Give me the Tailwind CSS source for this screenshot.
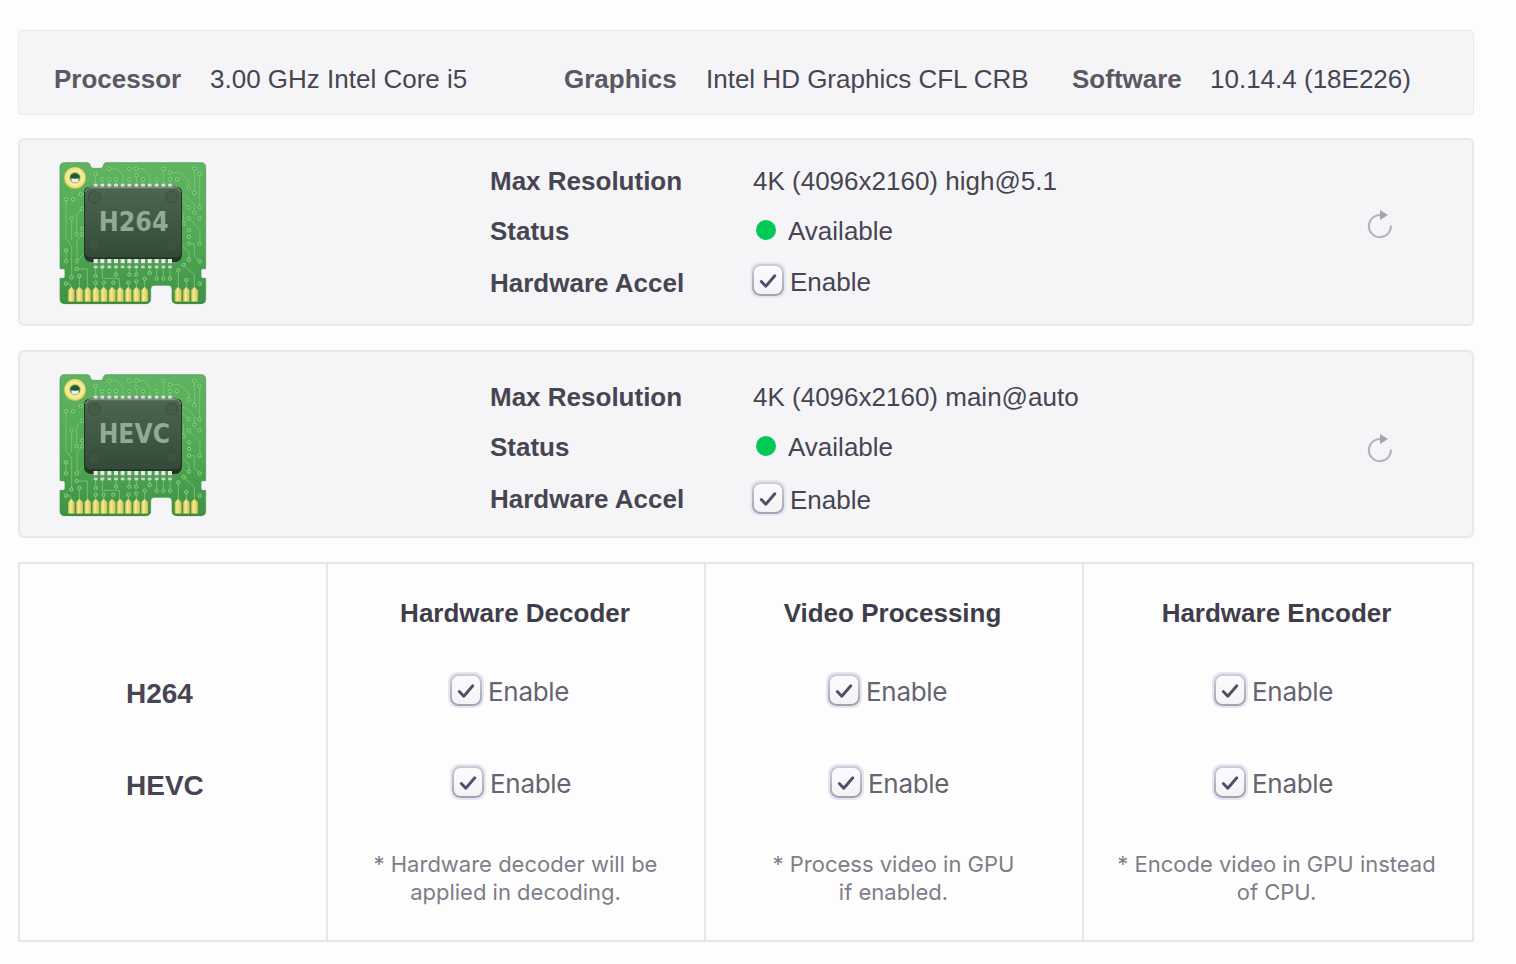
<!DOCTYPE html>
<html lang="en">
<head>
<meta charset="utf-8">
<title>Hardware Acceleration</title>
<script src="https://cdn.jsdelivr.net/npm/@tailwindcss/browser@4"></script>
</head>
<body class="bg-[#fdfdfd] font-['Liberation_Sans',Arial,sans-serif] text-[26px] leading-[30px] text-[#474552] w-[1516px] h-[964px] overflow-hidden pt-[30px] pl-[18px]">

<svg class="absolute w-0 h-0">
  <defs>
    <linearGradient id="board" x1="0" y1="0" x2="0" y2="1">
      <stop offset="0" stop-color="#62b765"/><stop offset=".55" stop-color="#54aa58"/><stop offset="1" stop-color="#3f9346"/>
    </linearGradient>
    <linearGradient id="body" x1="0" y1="0" x2="0" y2="1">
      <stop offset="0" stop-color="#4d6650"/><stop offset="1" stop-color="#344a38"/>
    </linearGradient>
    <linearGradient id="gold" x1="0" y1="0" x2="1" y2="0">
      <stop offset="0" stop-color="#c9bb4c"/><stop offset=".35" stop-color="#f4eb92"/><stop offset="1" stop-color="#d2c255"/>
    </linearGradient>
    <linearGradient id="box" x1="0" y1="0" x2="0" y2="1">
      <stop offset="0" stop-color="#cbccda"/><stop offset="1" stop-color="#a2a2b1"/>
    </linearGradient>
    <linearGradient id="face" x1="0" y1="0" x2="0" y2="1">
      <stop offset="0" stop-color="#fcfcfe"/><stop offset="1" stop-color="#f3f3f6"/>
    </linearGradient>
    <pattern id="hatch" width="8" height="8" patternUnits="userSpaceOnUse">
      <path d="M-2 2L2-2M0 8L8 0M6 10L10 6" stroke="#2f8038" stroke-opacity=".22" stroke-width="2"/>
    </pattern>
    <path id="pcb" d="M44 23H110Q120 23 121 32Q122 40 130 40H152Q159 40 160 32Q161 23 170 23H454Q467 23 467 37V341H458Q453 341 453 346V364Q453 370 459 370H467V433Q467 446 453 446H380Q367 446 366 434V404Q366 391 354 391H315Q302 391 302 404V433Q301 446 288 446H44Q30 446 30 433V370H39Q45 370 45 364V347Q45 341 39 341H30V36Q30 23 44 23Z"/>
    <symbol id="check" viewBox="0 0 36 36">
      <rect x="0" y="0" width="36" height="36" rx="9.500" fill="#e6e6ee"/>
      <rect x="3" y="3" width="30" height="30" rx="7.500" fill="url(#face)" stroke="url(#box)" stroke-width="2"/>
      <path d="M11.300 19.500L15.800 24.200L24.800 13.800" fill="none" stroke="#504e68" stroke-width="2.900" stroke-linecap="round" stroke-linejoin="round"/>
    </symbol>
    <symbol id="reload" viewBox="0 0 60 50">
      <path d="M30 15A11.100 11.100 0 1 0 41 25.500" fill="none" stroke="#b5b5b9" stroke-width="2"/>
      <path d="M30 10L38 15L30 20Z" fill="#a5a5aa"/>
    </symbol>
    <marker id="via" markerUnits="userSpaceOnUse" markerWidth="16" markerHeight="16" refX="8" refY="8">
      <circle cx="8" cy="8" r="5" fill="#459c4b" stroke="#8fd87e" stroke-width="3"/>
    </marker>
    <symbol id="chip" viewBox="0 0 510 465">
      <use href="#pcb" fill="url(#board)"/>
      <use href="#pcb" fill="url(#hatch)" stroke="#43954a" stroke-width="2"/>
      <path d="M34 440Q38 444 44 444H288Q297 444 300 437M368 437Q371 444 380 444H453Q460 444 464 438" fill="none" stroke="#2f7d39" stroke-width="3"/>
      <g fill="none" stroke="#7cc970" stroke-width="2.500">
        <g marker-start="url(#via)"></g>
        <g style="marker-start:url(#via)">
        <path d="M178 41H200L219 60V90"/><path d="M259 41H280L300 60V90"/><path d="M238 41V41"/>
        <path d="M137 57V90"/><path d="M157 73V90"/><path d="M178 73V90"/><path d="M198 73V90"/><path d="M238 73V90"/>
        <path d="M259 61V90"/><path d="M279 73V90"/><path d="M320 73V90"/><path d="M340 41V90"/><path d="M360 73V90"/>
        <path d="M381 73V73"/><path d="M360 53H390L416 75V98"/><path d="M433 41V114"/><path d="M449 57V157"/>
        <path d="M433 114V114"/><path d="M416 98V98"/>
        <path d="M433 173V148L406 122H395"/><path d="M416 157L397 139"/><path d="M449 157V157"/><path d="M449 190V190"/>
        <path d="M416 190L450 224V266"/><path d="M401 206V172"/><path d="M417 226V226"/><path d="M417 246V246"/>
        <path d="M417 266H433V303L449 319"/><path d="M449 266V266"/><path d="M449 319V319"/><path d="M417 314V292L397 272"/>
        <path d="M401 330L433 360V395"/><path d="M385 346V400"/><path d="M409 375V400"/><path d="M449 386V386"/>
        <path d="M92 117H104"/><path d="M48 133V250L65 275V366"/><path d="M69 133V133"/><path d="M97 161L80 178V238"/><path d="M65 190V255"/>
        <path d="M80 238V238"/><path d="M97 221V221"/><path d="M48 286V286"/><path d="M48 319V286"/><path d="M97 238L81 254V319"/>
        <path d="M80 319L103 296"/><path d="M80 342H112V400"/><path d="M64 367V367"/><path d="M88 363V400"/><path d="M48 386H60L65 400"/>
        <path d="M137 363V335"/><path d="M137 383V400"/><path d="M161 383V400"/><path d="M157 335V370H208V400"/><path d="M198 359V335"/><path d="M190 383H197"/>
        <path d="M238 359V335"/><path d="M259 359V335"/><path d="M235 383V400"/><path d="M259 379V400"/><path d="M284 371V400"/><path d="M299 354V335"/>
        <path d="M320 371V335"/><path d="M340 371V335"/><path d="M360 371V335"/>
        </g>
      </g>
      <circle cx="75" cy="69" r="33" fill="#c9bd4f"/><circle cx="75" cy="68" r="31" fill="#eee682"/>
      <circle cx="75" cy="68" r="22" fill="none" stroke="#fbf7be" stroke-width="3"/>
      <circle cx="75" cy="68" r="15.500" fill="#276e42" stroke="#cfc359" stroke-width="2"/>
      <ellipse cx="75" cy="74" rx="11" ry="8" fill="#e7f0ee"/>
      <path d="M61 62Q75 52 89 62Q88 72 75 71Q62 72 61 62Z" fill="#23583a"/>
      <g stroke="#e5dbe2" stroke-width="11">
        <path d="M137 86V98M157 86V98M178 86V98M198 86V98M218 86V98M238 86V98M259 86V98M279 86V98M299 86V98M320 86V98M340 86V98M360 86V98"/>
      </g>
      <path d="M102 113Q102 95 121 95H378Q396 95 396 113V299Q394 321 374 321H366V312H131V321H124Q104 321 102 301Z" fill="#243528"/>
      <g fill="none" stroke="#e6e8e2" stroke-width="12">
        <path d="M137 312V325M157 312V325M178 312V325M198 312V325M218 312V325M238 312V325M259 312V325M279 312V325M299 312V325M320 312V325M340 312V325M360 312V325"/>
        <path stroke="#7c9479" stroke-width="6" d="M137 325V332M157 325V332M178 325V332M198 325V332M218 325V332M238 325V332M259 325V332M279 325V332M299 325V332M320 325V332M340 325V332M360 325V332"/>
        <path stroke="#c9d8c4" stroke-width="11" d="M137 332V340M157 332V340M178 332V340M198 332V340M218 332V340M238 332V340M259 332V340M279 332V340M299 332V340M320 332V340M340 332V340M360 332V340"/>
      </g>
      <rect x="105" y="98" width="288" height="209" rx="17" fill="url(#body)"/>
      <path d="M107 111Q109 98 122 98H376Q389 98 391 111" fill="none" stroke="#93a294" stroke-width="3"/>
      <g fill="#41583f" fill-opacity=".5" stroke="#344b38" stroke-width="2.500">
        <circle cx="133" cy="126" r="18"/><circle cx="365" cy="126" r="18"/><circle cx="133" cy="271" r="18"/><circle cx="365" cy="271" r="18"/>
      </g>
      <g fill="url(#gold)" stroke="#6f9a3d" stroke-width="1">
        <path d="M54 440V406L64 395L74 406V440Z"/><path d="M78 440V406L88 395L99 406V440Z"/><path d="M103 440V406L113 395L123 406V440Z"/>
        <path d="M127 440V406L137 395L148 406V440Z"/><path d="M151 440V406L161 395L172 406V440Z"/><path d="M176 440V406L186 395L197 406V440Z"/>
        <path d="M200 440V406L210 395L221 406V440Z"/><path d="M225 440V406L235 395L245 406V440Z"/><path d="M249 440V406L259 395L270 406V440Z"/>
        <path d="M273 440V406L284 395L294 406V440Z"/><path d="M374 440V406L384 395L395 406V440Z"/><path d="M399 440V406L409 395L419 406V440Z"/><path d="M423 440V406L433 395L444 406V440Z"/>
      </g>
    </symbol>
  </defs>
</svg>

<main class="w-[1456px] flex flex-col">
  <section class="h-[85px] rounded-[4px] border border-[#e9e9ec] bg-[#f5f5f7] flex items-center pt-[13px] pl-[35px] whitespace-nowrap">
    <b class="w-[156px] text-[#595863]">Processor</b><span class="w-[354px]">3.00 GHz Intel Core i5</span>
    <b class="w-[142px] text-[#595863]">Graphics</b><span class="w-[366px]">Intel HD Graphics CFL CRB</span>
    <b class="w-[138px] text-[#595863]">Software</b><span>10.14.4 (18E226)</span>
  </section>

  <section class="mt-[23px] h-[188px] rounded-[6px] border-2 border-[#e9e9ec] bg-[#f5f5f7] flex items-start">
    <svg class="ml-[30px] mt-[15px] w-[170px] h-[155px] shrink-0" viewBox="0 0 510 465"><use href="#chip"/>
      <text x="146" y="228" textLength="210" lengthAdjust="spacingAndGlyphs" class="font-['DejaVu_Sans',sans-serif] font-bold text-[77px]" fill="#8fab95">H264</text></svg>
    <div class="ml-[270px] mt-[26px] w-[262px] flex flex-col font-bold">
      <span>Max Resolution</span><span class="mt-[20px]">Status</span><span class="mt-[22px]">Hardware Accel</span>
    </div>
    <div class="mt-[26px] w-[580px] flex flex-col">
      <span class="pl-[1px]">4K (4096x2160) high@5.1</span>
      <span class="mt-[20px] flex items-center"><i class="ml-[4px] mr-[12px] -mt-[2px] w-5 h-5 rounded-full bg-[#00c957]"></i>Available</span>
      <span class="mt-[16px] h-9 -ml-[2px] flex items-center"><svg class="w-9 h-9"><use href="#check"/></svg><span class="pt-[3px] pl-1">Enable</span></span>
    </div>
    <svg class="mt-[60px] ml-[18px] w-[60px] h-[50px]"><use href="#reload"/></svg>
  </section>

  <section class="mt-[24px] h-[188px] rounded-[6px] border-2 border-[#e9e9ec] bg-[#f5f5f7] flex items-start">
    <svg class="ml-[30px] mt-[15px] w-[170px] h-[155px] shrink-0" viewBox="0 0 510 465"><use href="#chip"/>
      <text x="146" y="228" textLength="214" lengthAdjust="spacingAndGlyphs" class="font-['DejaVu_Sans',sans-serif] font-bold text-[77px]" fill="#8fab95">HEVC</text></svg>
    <div class="ml-[270px] mt-[30px] w-[262px] flex flex-col font-bold">
      <span>Max Resolution</span><span class="mt-[20px]">Status</span><span class="mt-[22px]">Hardware Accel</span>
    </div>
    <div class="mt-[30px] w-[580px] flex flex-col">
      <span class="pl-[1px]">4K (4096x2160) main@auto</span>
      <span class="mt-[20px] flex items-center"><i class="ml-[4px] mr-[12px] -mt-[2px] w-5 h-5 rounded-full bg-[#00c957]"></i>Available</span>
      <span class="mt-[18px] h-9 -ml-[2px] flex items-center"><svg class="w-9 h-9"><use href="#check"/></svg><span class="pt-[3px] pl-1">Enable</span></span>
    </div>
    <svg class="mt-[72px] ml-[18px] w-[60px] h-[50px]"><use href="#reload"/></svg>
  </section>

  <section class="mt-[24px] h-[380px] border-2 border-[#e6e6e9] grid grid-cols-[308px_378px_378px_388px] font-['Inter',sans-serif] text-[#666470]">
    <div class="border-r-2 border-[#e6e6e9] pl-[106px] pt-[114px] flex flex-col gap-[60px] text-[28px] leading-[32px] font-bold text-[#474552] font-['Liberation_Sans',Arial,sans-serif]">
      <span>H264</span><span>HEVC</span>
    </div>
    <div class="border-r-2 border-[#e6e6e9] pt-[34px]">
      <h2 class="pr-[2px] text-center font-bold text-[#3f3d4a] font-['Liberation_Sans',Arial,sans-serif]">Hardware Decoder</h2>
      <div class="mt-[44px] ml-[120px] h-9 flex items-center"><svg class="w-9 h-9 mr-[3px]"><use href="#check"/></svg><span class="pt-[3px] pl-[1px] tracking-[-0.3px]">Enable</span></div>
      <div class="mt-[56px] ml-[122px] h-9 flex items-center"><svg class="w-9 h-9 mr-[3px]"><use href="#check"/></svg><span class="pt-[3px] pl-[1px] tracking-[-0.3px]">Enable</span></div>
      <p class="mt-[50px] pr-[1px] text-center text-[22px] leading-[28px] text-[#7f7d89]">* Hardware decoder will be<br>applied in decoding.</p>
    </div>
    <div class="border-r-2 border-[#e6e6e9] pt-[34px]">
      <h2 class="pr-[3px] text-center font-bold text-[#3f3d4a] font-['Liberation_Sans',Arial,sans-serif]">Video Processing</h2>
      <div class="mt-[44px] ml-[120px] h-9 flex items-center"><svg class="w-9 h-9 mr-[3px]"><use href="#check"/></svg><span class="pt-[3px] pl-[1px] tracking-[-0.3px]">Enable</span></div>
      <div class="mt-[56px] ml-[122px] h-9 flex items-center"><svg class="w-9 h-9 mr-[3px]"><use href="#check"/></svg><span class="pt-[3px] pl-[1px] tracking-[-0.3px]">Enable</span></div>
      <p class="mt-[50px] pr-[1px] text-center text-[22px] leading-[28px] text-[#7f7d89]">* Process video in GPU<br>if enabled.</p>
    </div>
    <div class="pt-[34px]">
      <h2 class="pr-[3px] text-center font-bold text-[#3f3d4a] font-['Liberation_Sans',Arial,sans-serif]">Hardware Encoder</h2>
      <div class="mt-[44px] ml-[128px] h-9 flex items-center"><svg class="w-9 h-9 mr-[3px]"><use href="#check"/></svg><span class="pt-[3px] pl-[1px] tracking-[-0.3px]">Enable</span></div>
      <div class="mt-[56px] ml-[128px] h-9 flex items-center"><svg class="w-9 h-9 mr-[3px]"><use href="#check"/></svg><span class="pt-[3px] pl-[1px] tracking-[-0.3px]">Enable</span></div>
      <p class="mt-[50px] pr-[3px] text-center text-[22px] leading-[28px] text-[#7f7d89]">* Encode video in GPU instead<br>of CPU.</p>
    </div>
  </section>
</main>
</body>
</html>
